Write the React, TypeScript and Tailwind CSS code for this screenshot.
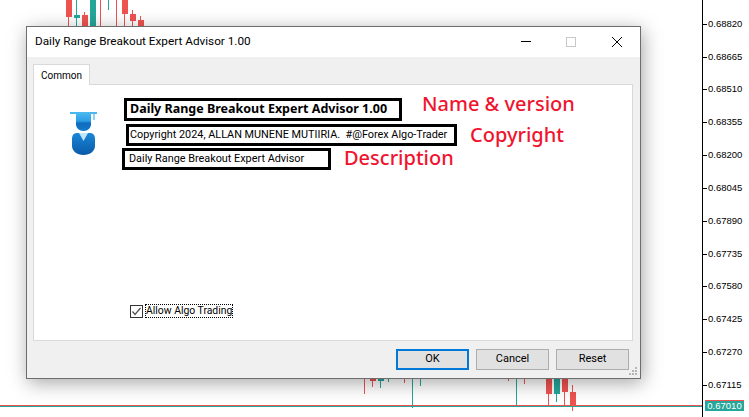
const axisLabels = [
  { y: 24, text: "0.68820" },
  { y: 57, text: "0.68665" },
  { y: 89, text: "0.68510" },
  { y: 122, text: "0.68355" },
  { y: 155, text: "0.68200" },
  { y: 188, text: "0.68045" },
  { y: 221, text: "0.67890" },
  { y: 254, text: "0.67735" },
  { y: 286, text: "0.67580" },
  { y: 319, text: "0.67425" },
  { y: 352, text: "0.67270" },
  { y: 385, text: "0.67115" },
];

const RED = "#ef5350";
const TEAL = "#26a69a";

// x, wick top, wick bottom, body top, body bottom, color
const candles: [number, number, number, number, number, string][] = [
  [68, 0, 26, 0, 17, RED],
  [76, 0, 26, 15, 18, TEAL],
  [84, 12, 26, 15, 26, RED],
  [92, 0, 26, 0, 26, TEAL],
  [100, 0, 26, 0, 0, RED],
  [108, 0, 10, 0, 0, TEAL],
  [116, 0, 26, 0, 0, RED],
  [124, 0, 26, 0, 14, RED],
  [132, 10, 26, 14, 21, RED],
  [140, 16, 26, 20, 26, RED],
  [364, 378, 394, 0, 0, RED],
  [372, 378, 387, 378, 381, RED],
  [380, 378, 388, 378, 381, TEAL],
  [388, 378, 382, 0, 0, TEAL],
  [404, 378, 383, 0, 0, RED],
  [412, 378, 408, 0, 0, TEAL],
  [420, 378, 386, 0, 0, TEAL],
  [508, 378, 381, 0, 0, RED],
  [516, 378, 407, 0, 0, TEAL],
  [524, 378, 384, 0, 0, RED],
  [548, 378, 405, 378, 394, RED],
  [556, 378, 402, 378, 394, TEAL],
  [564, 378, 405, 378, 392, RED],
  [572, 385, 411, 392, 407, RED],
];

const Chart = () => (
  <svg className="absolute inset-0" width={749} height={417}>
    {candles.map(([x, t, b, bt, bb, c], i) => (
      <g key={i} fill={c}>
        <rect x={x} y={t} width={1} height={b - t} />
        {bb > bt && <rect x={x - 2} y={bt} width={6} height={bb - bt} />}
      </g>
    ))}
    <rect x={0} y={405} width={702} height={1} fill={RED} />
    <rect x={0} y={406} width={702} height={1} fill={TEAL} />
    <rect x={702} y={0} width={1} height={417} fill="#000" />
  </svg>
);

const GradIcon = () => (
  <svg width={28} height={43} viewBox="0 0 28 43">
    <defs>
      <linearGradient id="cap" x1="0" y1="0" x2="0" y2="1">
        <stop offset="0" stopColor="#46b4ee" />
        <stop offset="0.4" stopColor="#2f9fe6" />
        <stop offset="0.55" stopColor="#0f6cbd" />
        <stop offset="1" stopColor="#1478cc" />
      </linearGradient>
      <linearGradient id="body" x1="0" y1="0" x2="0" y2="1">
        <stop offset="0" stopColor="#1a86d8" />
        <stop offset="1" stopColor="#0a5aa8" />
      </linearGradient>
    </defs>
    <rect x={0} y={0} width={27} height={2} fill="#4ab8ee" />
    <rect x={23} y={2} width={2} height={6} fill="#8fd3f4" />
    <path d="M6 2h15v10c0 4-3 7-7.500 7s-7.500-3-7.500-7z" fill="url(#cap)" />
    <path d="M7 21c-3 0-5 2-5 6v7c0 5 5 9 11.500 9s11.500-4 11.500-9v-7c0-4-2-6-5-6z" fill="url(#body)" />
    <path d="M9 21h9l-4.500 8z" fill="#bfe6fa" />
  </svg>
);

const Btn = ({ label, primary }: { label: string; primary?: boolean }) => (
  <div
    className={
      "flex h-[21px] w-[73px] items-center justify-center bg-[#e1e1e1] text-[11px] text-black " +
      (primary ? "border-2 border-[#0078d7]" : "border border-[#adadad]")
    }
  >
    {label}
  </div>
);

export default function App() {
  return (
    <div
      className="relative h-[417px] w-[749px] overflow-hidden bg-white"
      style={{ fontFamily: "Roboto, 'Noto Sans', sans-serif" }}
    >
      <Chart />

      {axisLabels.map((l) => (
        <div
          key={l.text}
          className="absolute left-[702px] flex h-[12px] items-center gap-[1px] text-[9.500px] text-black"
          style={{ top: l.y - 6, fontFamily: "'Liberation Sans', sans-serif" }}
        >
          <span className="h-px w-[5px] bg-black" />
          <span className="mt-[1px]">{l.text}</span>
        </div>
      ))}

      <div className="absolute left-[705px] top-[400px] h-[1px] w-[39px] bg-[#ef5350]" />
      <div
        className="absolute left-[705px] top-[401px] flex h-[10px] w-[39px] items-center justify-center bg-[#26a69a] text-[9.500px] text-white"
        style={{ fontFamily: "'Liberation Sans', sans-serif" }}
      >
        0.67010
      </div>

      {/* dialog window */}
      <div className="absolute left-[26px] top-[26px] flex h-[353px] w-[615px] flex-col border border-[#6d6d6d] bg-[#f0f0f0] shadow-[2px_4px_18px_rgba(0,0,0,0.35)]">
        <div className="flex h-[30px] shrink-0 items-center bg-white pl-[8px] text-[11.750px] text-black">
          <span className="flex-1">Daily Range Breakout Expert Advisor 1.00</span>
          <svg width={101} height={16} viewBox="0 0 101 16" className="mr-[18px]">
            <rect x={0} y={7} width={10} height={1} fill="#000" />
            <rect x={45.5} y={3.5} width={9} height={9} fill="none" stroke="#c8c8c8" />
            <path d="M91 3l10 10M101 3L91 13" stroke="#000" fill="none" />
          </svg>
        </div>

        <div className="flex flex-1 flex-col px-[6px] pt-[7px]">
          <div className="z-10 -mb-px flex h-[21px] w-[57px] items-center justify-center border border-b-0 border-[#d9d9d9] bg-white text-[10px] text-black">
            Common
          </div>
          <div className="relative flex h-[257px] w-[600px] flex-col border border-[#d9d9d9] bg-white">
            <div className="flex">
              <div className="ml-[36px] mt-[27px] shrink-0">
                <GradIcon />
              </div>
              <div className="ml-[24px] mt-[13px] flex flex-col items-start text-[10.850px] text-black">
                <div className="flex h-[23px] items-center">
                  <div className="ml-[2px] flex h-[23px] w-[278px] items-center border-[3px] border-black pl-[3px] text-[12.500px] font-bold" style={{ fontFamily: "'Noto Sans', sans-serif" }}>
                    Daily Range Breakout Expert Advisor 1.00
                  </div>
                  <span className="mb-[12px] ml-[20px] text-[20px] font-medium leading-none text-[#f0142f]" style={{ fontFamily: "'Noto Sans', sans-serif" }}>Name &amp; version</span>
                </div>
                <div className="mt-[3px] flex h-[22px] items-center">
                  <div className="ml-[4px] flex h-[22px] w-[331px] items-center border-[3px] border-black pl-[1px] whitespace-pre">
                    Copyright 2024, ALLAN MUNENE MUTIIRIA.  #@Forex Algo-Trader
                  </div>
                  <span className="ml-[13px] text-[20px] font-medium leading-none text-[#f0142f]" style={{ fontFamily: "'Noto Sans', sans-serif" }}>Copyright</span>
                </div>
                <div className="mt-[2px] flex h-[22px] items-center">
                  <div className="flex h-[22px] w-[209px] items-center border-[3px] border-black pl-[4px]">
                    Daily Range Breakout Expert Advisor
                  </div>
                  <span className="mb-[2px] ml-[13px] text-[20px] font-medium leading-none text-[#f0142f]" style={{ fontFamily: "'Noto Sans', sans-serif" }}>Description</span>
                </div>
              </div>
            </div>

            <div className="ml-[96px] mt-auto mb-[22px] flex items-center gap-[2px] text-[10.400px] text-black">
              <span className="flex h-[13px] w-[13px] items-center justify-center border border-[#333] bg-white">
                <svg width={11} height={11} viewBox="0 0 11 11">
                  <path d="M1.500 5.500L4 8.500L9.500 2" fill="none" stroke="#555" strokeWidth={1.3} />
                </svg>
              </span>
              <span className="border border-dotted border-black leading-[12px]">Allow Algo Trading</span>
            </div>
          </div>

          <div className="mt-[8px] flex justify-end gap-[7px] pr-[5px]">
            <Btn label="OK" primary />
            <Btn label="Cancel" />
            <Btn label="Reset" />
          </div>
        </div>

        <svg width={9} height={9} viewBox="0 0 9 9" className="absolute bottom-[2px] right-[2px]" fill="#b5b5b5">
          <rect x={6} y={0} width={2} height={2} />
          <rect x={3} y={3} width={2} height={2} />
          <rect x={6} y={3} width={2} height={2} />
          <rect x={0} y={6} width={2} height={2} />
          <rect x={3} y={6} width={2} height={2} />
          <rect x={6} y={6} width={2} height={2} />
        </svg>
      </div>
    </div>
  );
}
